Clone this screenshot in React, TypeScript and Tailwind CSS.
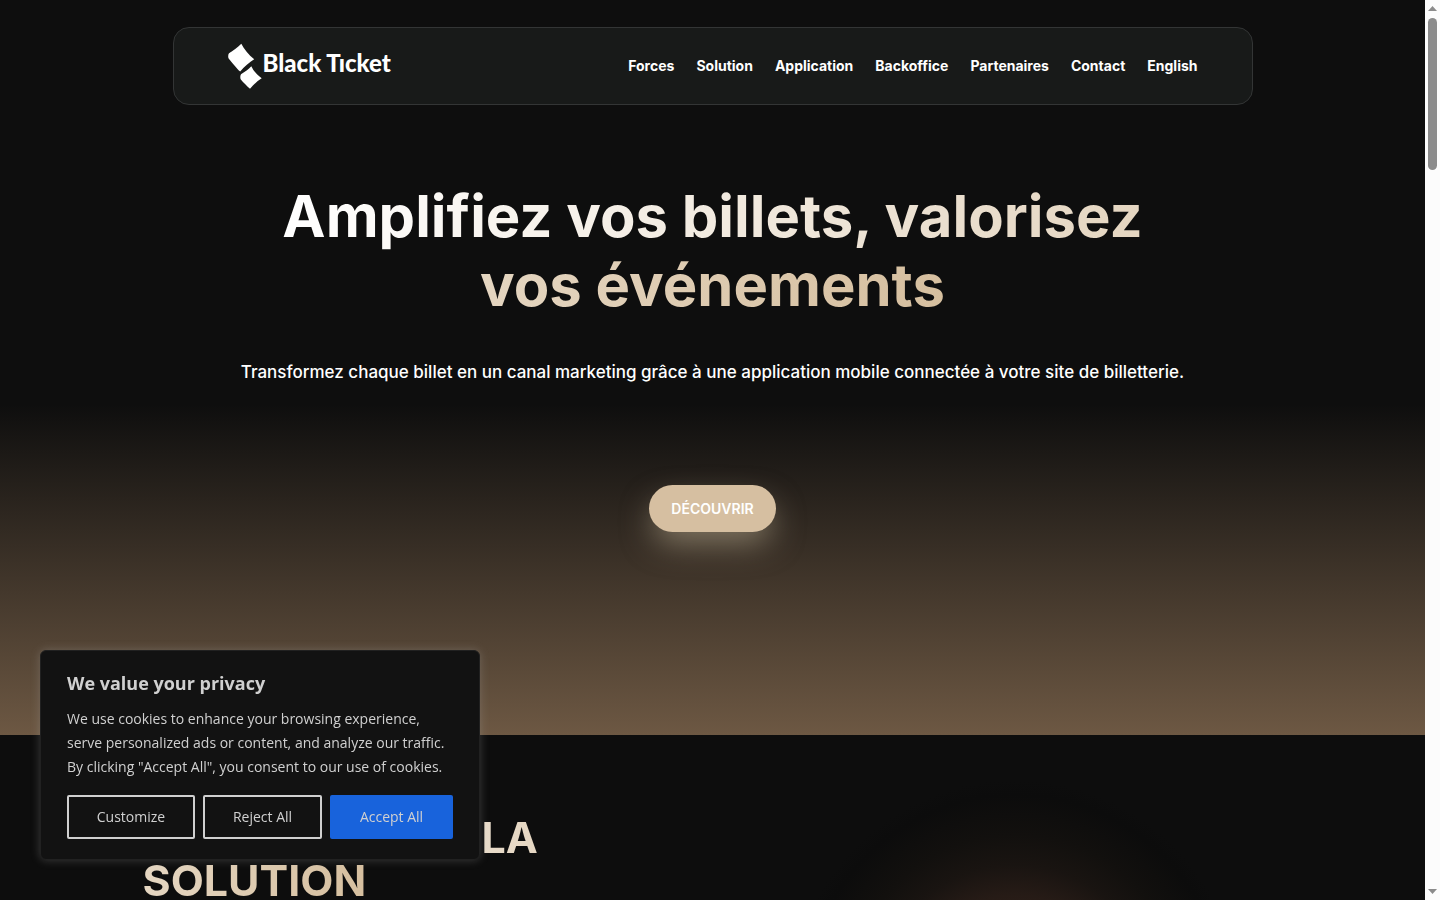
const navItems = ["Forces", "Solution", "Application", "Backoffice", "Partenaires", "Contact", "English"];

function Logo() {
  return (
    <a href="#accueil" aria-label="Black Ticket" className="flex items-center gap-px text-white">
      <svg width="34" height="46" viewBox="0 0 34 46" fill="currentColor" aria-hidden="true">
        <path d="M13.300 0.800C16 6 20.500 11.800 26.200 16.300C21.500 19.500 16 23.800 12.200 28.600C9 26 4 19.500 0.800 15.800C-0.100 14.300 0 11.500 1 10.200C5 7.800 9.500 4.500 13.300 0.800Z" />
        <path d="M23.300 23.300C25.500 28 29.200 32.200 33.700 35.300C29.500 38 25.500 41.600 22 45.800C19 43 15.500 39.800 12.800 36.500C11.900 34.800 12.300 32 13.300 31C17 29 20.500 26.300 23.300 23.300Z" />
      </svg>
      <span className="pb-[6px] font-['Lato',sans-serif] text-2xl leading-6 font-black whitespace-nowrap">Black Tıcket</span>
    </a>
  );
}

function Header() {
  return (
    <header className="mx-auto flex h-[78px] w-full max-w-[1080px] items-center justify-between rounded-2xl border border-[#333535] bg-[#181a19] px-[54px]">
      <Logo />
      <nav aria-label="Principal" className="pb-[2px]">
        <ul className="flex items-center gap-[22px]">
          {navItems.map((item) => (
            <li key={item}>
              <a href={`#${item.toLowerCase()}`} className="text-sm font-bold text-white">
                {item}
              </a>
            </li>
          ))}
        </ul>
      </nav>
    </header>
  );
}

function Hero() {
  return (
    <section className="bg-[linear-gradient(180deg,#0e0e0e_0%,#0e0e0e_55%,#6d5843_100%)] pt-[27px] pb-[203px]">
      <Header />
      <div className="mx-auto flex w-full max-w-[1080px] flex-col items-center text-center">
        <h1 className="mt-[77px] px-16 text-[58px] leading-[69px] font-bold">
          <span className="bg-[linear-gradient(90deg,#ffffff_0%,#d6bf9f_100%)] bg-clip-text text-transparent">
            Amplifiez vos billets, valorisez vos événements
          </span>
        </h1>
        <p className="mt-[38px] text-[17px] leading-7 font-medium text-white">
          Transformez chaque billet en un canal marketing grâce à une application mobile connectée à votre site de
          billetterie.
        </p>
        <a
          href="#solution"
          className="mt-[99px] flex h-[47px] items-center rounded-full bg-[#d6bfa1] px-[22px] text-sm font-semibold text-white shadow-[0_14px_32px_-4px_rgba(220,204,172,0.5)]"
        >
          DÉCOUVRIR
        </a>
      </div>
    </section>
  );
}

function Strengths() {
  return (
    <section
      id="forces"
      className="grow bg-[#0d0d0d] bg-[radial-gradient(circle_at_1015px_270px,#42291f_0%,#261b16_110px,#191411_140px,#12100e_170px,#0c0c0c_210px,#0d0d0d_225px)] px-[10%] pt-[81px]"
    >
      <h2 className="max-w-[540px] text-[43px] leading-[43px] font-bold">
        <span className="bg-[linear-gradient(90deg,#ffffff_0%,#d6bf9f_100%)] bg-clip-text text-transparent">
          LES FORCES DE LA SOLUTION
        </span>
      </h2>
    </section>
  );
}

function CookieBanner() {
  const outlined = "h-11 rounded-[2px] border-2 border-[#d0d0d0] text-sm text-[#d0d0d0]";
  return (
    <aside
      aria-label="We value your privacy"
      className="fixed bottom-10 left-10 w-[440px] rounded-md border border-[#212121] bg-[#121212] px-[26px] pt-5 pb-5 font-['Open_Sans',sans-serif] text-[#d0d0d0] shadow-[0_0_10px_rgba(172,171,171,0.3)]"
    >
      <h2 className="text-lg leading-6 font-bold">We value your privacy</h2>
      <p className="mt-3 text-sm leading-6">
        We use cookies to enhance your browsing experience, serve personalized ads or content, and analyze our traffic.
        By clicking "Accept All", you consent to our use of cookies.
      </p>
      <div className="mt-4 flex gap-2">
        <button type="button" className={`${outlined} w-32`}>Customize</button>
        <button type="button" className={`${outlined} w-[119px]`}>Reject All</button>
        <button type="button" className="h-11 grow rounded-[2px] bg-[#1863dc] text-sm text-[#d0d0d0]">Accept All</button>
      </div>
    </aside>
  );
}

function ScrollTrack() {
  return (
    <div aria-hidden="true" className="flex w-[15px] shrink-0 flex-col items-center bg-[#fcfcfc] py-[6px]">
      <svg width="9" height="5" viewBox="0 0 9 5" fill="#8b8b8b">
        <path d="M4.500 0L9 5H0Z" />
      </svg>
      <div className="mt-[7px] h-[152px] w-[9px] rounded-full bg-[#8b8b8b]" />
      <svg className="mt-auto" width="9" height="5" viewBox="0 0 9 5" fill="#8b8b8b">
        <path d="M0 0H9L4.500 5Z" />
      </svg>
    </div>
  );
}

export default function App() {
  return (
    <div className="flex h-screen overflow-hidden bg-[#0d0d0d] font-['Inter',sans-serif]">
      <main className="flex min-w-0 grow flex-col">
        <Hero />
        <Strengths />
      </main>
      <ScrollTrack />
      <CookieBanner />
    </div>
  );
}
